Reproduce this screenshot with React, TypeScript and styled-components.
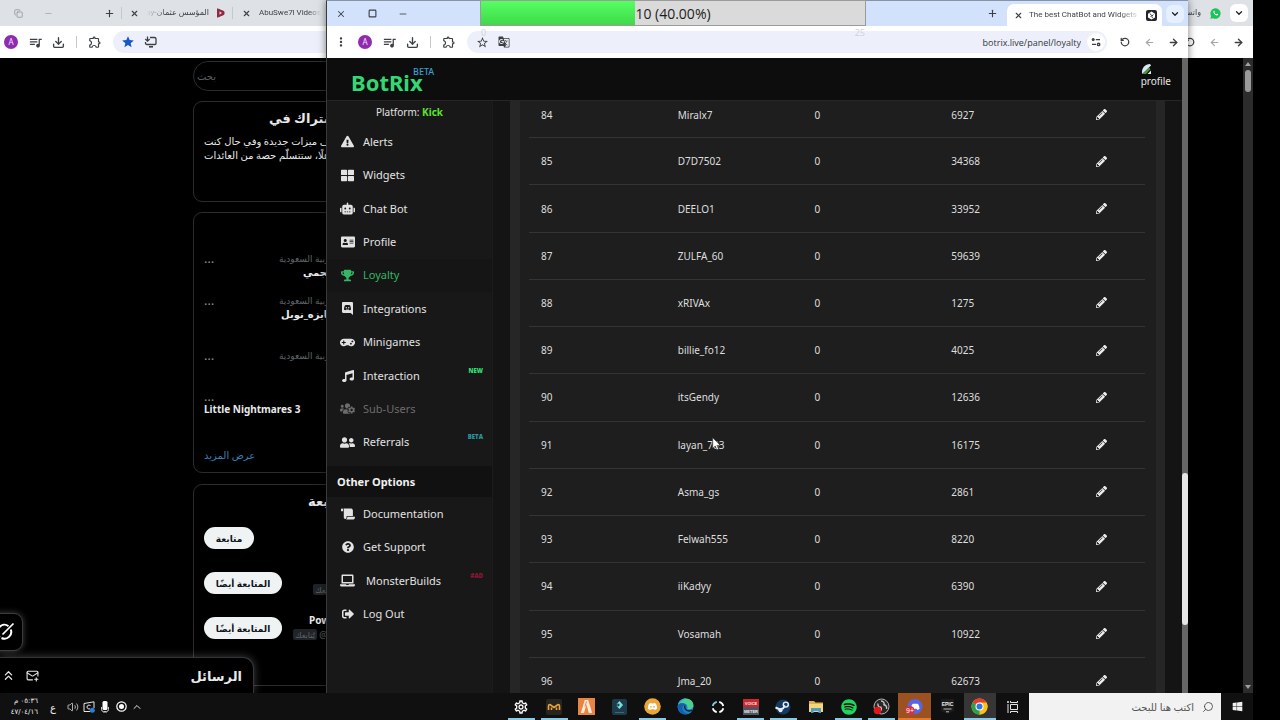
import React from 'react';
import styled, { createGlobalStyle } from 'styled-components';
import {
  FaExclamationTriangle,
  FaThLarge,
  FaRobot,
  FaAddressCard,
  FaTrophy,
  FaGamepad,
  FaMusic,
  FaUsersCog,
  FaUserFriends,
  FaScroll,
  FaQuestionCircle,
  FaLaptop,
  FaSignOutAlt,
  FaPencilAlt,
  FaWhatsapp,
  FaSpotify,
  FaDiscord,
  FaWindows,
} from 'react-icons/fa';
import {
  MdQueueMusic,
  MdOutlineExtension,
  MdOutlineSettings,
  MdStar,
  MdStarBorder,
  MdMoreVert,
  MdGTranslate,
} from 'react-icons/md';
import {
  ArrowLeft,
  ArrowRight,
  ChevronDown,
  ChevronUp,
  ChevronsUp,
  Download,
  Minus,
  Plus,
  RotateCcw,
  Search,
  Square,
  Copy,
  Volume2,
  X,
  MailPlus,
} from 'lucide-react';

const ui = '"Noto Sans", "Open Sans", "DejaVu Sans", sans-serif';

const GlobalStyle = createGlobalStyle`
  * { box-sizing: border-box; }
  html, body { margin: 0; height: 100%; background: #000; }
  body { font-family: ${ui}; font-size: 11px; overflow: hidden; }
  button { font: inherit; color: inherit; border: 0; padding: 0; background: none; cursor: pointer; }
  input { font: inherit; border: 0; padding: 0; background: none; outline: 0; }
  a { color: inherit; text-decoration: none; }
  ul { list-style: none; margin: 0; padding: 0; }
  h1, h2, p { margin: 0; }
  svg { display: block; flex: none; }
`;

const Desktop = styled.div`
  display: flex;
  flex-direction: column;
  height: 100vh;
  background: #000;
`;

const Stage = styled.main`
  position: relative;
  flex: 1;
  min-height: 0;
  overflow: hidden;
`;

const Window = styled.section<{ $left: number; $right: number }>`
  position: absolute;
  top: 0;
  bottom: 0;
  left: ${(p) => p.$left}px;
  right: ${(p) => p.$right}px;
  display: flex;
  flex-direction: column;
  overflow: hidden;
`;

const FrontWindow = styled(Window)`
  border-left: 1px solid #3a3a3a;
  border-top: 1px solid #8a93a3;
  box-shadow: 0 0 8px rgba(0, 0, 0, 0.5);
  background: #141414;
`;

/* ---------- browser chrome ---------- */

const TabStrip = styled.div<{ $color: string; $height: number }>`
  display: flex;
  align-items: center;
  justify-content: space-between;
  flex: none;
  height: ${(p) => p.$height}px;
  background: ${(p) => p.$color};
  color: #3c4043;
`;

const Group = styled.div<{ $gap: number; $pad?: string }>`
  display: flex;
  align-items: center;
  gap: ${(p) => p.$gap}px;
  padding: ${(p) => p.$pad ?? '0'};
  height: 100%;
`;

const IconButton = styled.button<{ $size?: number; $color?: string }>`
  display: flex;
  align-items: center;
  justify-content: center;
  flex: none;
  width: ${(p) => p.$size ?? 12}px;
  height: ${(p) => p.$size ?? 12}px;
  color: ${(p) => p.$color ?? '#3c4043'};
`;

const Divider = styled.span`
  flex: none;
  width: 1px;
  height: 12px;
  background: #c4c8cc;
`;

const TabTitle = styled.span<{ $width: number }>`
  flex: none;
  width: ${(p) => p.$width}px;
  font-family: Roboto, "DejaVu Sans", sans-serif;
  font-size: 8px;
  line-height: 14px;
  white-space: nowrap;
  color: #3f4347;
  mask-image: linear-gradient(to right, #000 80%, transparent);
`;

const RtlTabTitle = styled(TabTitle)`
  mask-image: linear-gradient(to left, #000 70%, transparent);
`;

const ActiveTab = styled.div`
  display: flex;
  align-items: center;
  align-self: flex-end;
  gap: 5px;
  height: 22px;
  padding: 0 5px;
  border-radius: 7px 7px 0 0;
  background: #fff;
`;

const TabSearch = styled.button<{ $color: string }>`
  display: flex;
  align-items: center;
  justify-content: center;
  width: 18px;
  height: 18px;
  border-radius: 6px;
  background: ${(p) => p.$color};
  color: #202124;
`;

const Toolbar = styled.div`
  display: flex;
  align-items: center;
  flex: none;
  height: 32px;
  background: #fff;
`;

const Omnibox = styled.label`
  display: flex;
  align-items: center;
  flex: 1;
  height: 22px;
  gap: 10px;
  padding: 0 0 0 9px;
  border-radius: 11px;
  background: #edf0fa;
`;

const Url = styled.input`
  flex: 1;
  min-width: 0;
  margin-right: -4px;
  text-align: right;
  font-family: "Open Sans", sans-serif;
  font-size: 9px;
  color: #33373b;
`;

const SiteInfo = styled.button`
  display: flex;
  align-items: center;
  justify-content: center;
  width: 18px;
  height: 18px;
  margin-right: 2px;
  border-radius: 9px;
  background: #fff;
`;

const Avatar = styled.button`
  flex: none;
  width: 14px;
  height: 14px;
  border-radius: 7px;
  background: #8e2bb0;
  color: #f3e4f8;
  font-size: 8px;
  line-height: 14px;
`;

/* ---------- social page behind ---------- */

const Scroller = styled.div`
  display: flex;
  flex: 1;
  min-height: 0;
  justify-content: space-between;
`;

const Track = styled.div`
  display: flex;
  flex-direction: column;
  align-items: center;
  justify-content: space-between;
  width: 10px;
  padding: 4px 0;
  background: #2c2c2c;
`;

const Arrow = styled.span<{ $down?: boolean }>`
  border: 3px solid transparent;
  border-top-width: ${(p) => (p.$down ? 4 : 0)}px;
  border-bottom-width: ${(p) => (p.$down ? 0 : 4)}px;
  border-top-color: ${(p) => (p.$down ? '#a0a0a0' : 'transparent')};
  border-bottom-color: ${(p) => (p.$down ? 'transparent' : '#a0a0a0')};
`;

const TrackThumb = styled.span`
  flex: none;
  width: 6px;
  height: 22px;
  margin: 4px 0 auto;
  border-radius: 3px;
  background: #9a9a9a;
`;

const SocialColumn = styled.aside`
  display: flex;
  flex-direction: column;
  width: 350px;
  margin-left: 193px;
  padding-top: 3px;
  color: #e7e9ea;
`;

const SearchField = styled.input`
  flex: none;
  height: 30px;
  padding: 0 3px;
  border: 1px solid #2a2c2e;
  border-radius: 15px;
  text-align: left;
  font-size: 10px;
  color: #71767b;
  &::placeholder { color: #5a5e62; opacity: 1; }
`;

const Panel = styled.section<{ $height: number; $top: number }>`
  flex: none;
  height: ${(p) => p.$height}px;
  margin-top: ${(p) => p.$top}px;
  padding: 7px 10px;
  border: 1px solid #2a2c2e;
  border-radius: 9px;
`;

const PanelTitle = styled.h2<{ $inset: number }>`
  padding-left: ${(p) => p.$inset}px;
  font-size: 13px;
  line-height: 18px;
  text-align: left;
  white-space: nowrap;
`;

const PanelText = styled.p`
  margin-top: 7px;
  font-size: 10px;
  line-height: 14px;
  text-align: left;
  white-space: nowrap;
`;

const TrendList = styled.ul`
  padding-top: 32px;
`;

const TrendRow = styled.li<{ $height: number }>`
  display: flex;
  height: ${(p) => p.$height}px;
`;

const TrendItem = styled.li`
  display: flex;
  flex-direction: column;
`;

const Dots = styled.button`
  align-self: flex-start;
  width: 12px;
  height: 12px;
  text-align: left;
  font-size: 13px;
  line-height: 10px;
  color: #8a8f94;
`;

const TrendText = styled.div<{ $inset: number }>`
  display: flex;
  flex-direction: column;
  padding-left: ${(p) => p.$inset}px;
  white-space: nowrap;
`;

const TrendMeta = styled.span`
  font-size: 9px;
  line-height: 13px;
  text-align: left;
  color: #5f6468;
`;

const TrendName = styled.strong<{ $inset?: number }>`
  padding-left: ${(p) => p.$inset ?? 0}px;
  font-size: 10px;
  line-height: 14px;
  text-align: left;
`;

const MoreLink = styled.a`
  display: block;
  margin-top: 32px;
  font-size: 10px;
  line-height: 14px;
  text-align: left;
  color: #3b7fb5;
`;

const FollowList = styled.ul`
  padding-top: 17px;
`;

const FollowRow = styled.li`
  display: flex;
  align-items: flex-start;
  justify-content: flex-start;
  height: 45px;
`;

const FollowButton = styled.button<{ $wide?: boolean }>`
  flex: none;
  width: ${(p) => (p.$wide ? 78 : 50)}px;
  height: 22px;
  border-radius: 11px;
  background: #eff3f4;
  color: #0f1419;
  font-size: 9px;
  font-weight: 700;
`;

const Handle = styled.div<{ $inset: number }>`
  display: flex;
  flex-direction: column;
  margin-top: -4px;
  padding-left: ${(p) => p.$inset}px;
  font-size: 9px;
  line-height: 14px;
  color: #5f6468;
  white-space: nowrap;
`;

const HandleName = styled.strong`
  height: 15px;
  padding-left: 16px;
  font-size: 10px;
  line-height: 14px;
  color: #e7e9ea;
`;

const FollowsYou = styled.span`
  padding: 0 2px;
  border-radius: 2px;
  background: #202327;
  font-size: 8px;
`;

const GrokButton = styled.button`
  position: absolute;
  left: -16px;
  bottom: 42px;
  display: flex;
  align-items: center;
  justify-content: flex-end;
  width: 39px;
  height: 38px;
  padding-right: 7px;
  border: 1px solid #3a3c3e;
  border-radius: 9px;
  background: #000;
  box-shadow: 0 0 6px rgba(255, 255, 255, 0.25);
  color: #fff;
`;

const MessagesDrawer = styled.section`
  position: absolute;
  left: 0;
  bottom: 0;
  display: flex;
  align-items: center;
  gap: 12px;
  width: 254px;
  height: 36px;
  padding: 0 11px 0 2px;
  border: 1px solid #333537;
  border-width: 1px 1px 0 0;
  border-radius: 0 11px 0 0;
  background: #000;
  box-shadow: 0 0 8px rgba(255, 255, 255, 0.25);
  color: #e7e9ea;
`;

const DrawerTitle = styled.h2`
  margin-left: auto;
  font-size: 13px;
  line-height: 20px;
`;

/* ---------- dashboard ---------- */

const Header = styled.header`
  position: relative;
  z-index: 1;
  display: flex;
  align-items: center;
  justify-content: space-between;
  flex: none;
  height: 43px;
  padding: 0 11px 0 24px;
  border-bottom: 1px solid #262626;
  background: #0d0d0d;
`;

const Brand = styled.h1`
  position: relative;
  padding-top: 6px;
  font-size: 22px;
  line-height: 28px;
  font-weight: 700;
  color: #31d874;
`;

const BrandTag = styled.span`
  position: absolute;
  top: 4px;
  left: 62px;
  font-size: 9px;
  line-height: 12px;
  font-weight: 500;
  color: #3a9fce;
`;

const ProfileLink = styled.a`
  display: flex;
  flex-direction: column;
  align-self: flex-start;
  padding-top: 5px;
  font-size: 10px;
  line-height: 12px;
  color: #e6e6e6;
`;

const Page = styled.div`
  display: flex;
  flex-direction: column;
  flex: 1;
  min-width: 0;
  min-height: 0;
`;

const Body = styled.div`
  display: flex;
  flex: 1;
  min-height: 0;
`;

const Sidebar = styled.nav`
  flex: none;
  width: 166px;
  border-right: 1px solid #1c1c1c;
  background: #181818;
  color: #e2e2e2;
  overflow: hidden;
`;

const Platform = styled.p`
  padding: 3px 0 5px;
  font-size: 10px;
  line-height: 16px;
  text-align: center;
`;

const KickName = styled.strong`
  color: #5be32a;
`;

const NavList = styled.ul<{ $height: number }>`
  display: flex;
  flex-direction: column;
  height: ${(p) => p.$height}px;
`;

const NavItem = styled.li<{ $active?: boolean; $muted?: boolean }>`
  flex: 1;
  background: ${(p) => (p.$active ? '#151515' : 'transparent')};
  color: ${(p) => (p.$active ? '#35b566' : p.$muted ? '#6c6c6c' : 'inherit')};
`;

const NavLink = styled.a`
  display: grid;
  grid-template-columns: 15px 1fr auto;
  align-items: center;
  justify-items: start;
  gap: 8px;
  height: 100%;
  padding: 0 9px 0 13px;
  font-size: 11px;
  line-height: 16px;
  & > svg { justify-self: center; }
`;

const NavLabel = styled.span<{ $indent?: boolean }>`
  padding-left: ${(p) => (p.$indent ? 3 : 0)}px;
`;

const Tag = styled.span<{ $color: string }>`
  padding-bottom: 10px;
  font-family: "Open Sans", sans-serif;
  font-size: 6px;
  line-height: 8px;
  font-weight: 800;
  color: ${(p) => p.$color};
`;

const SectionTitle = styled.h2`
  margin-top: 7px;
  padding: 0 10px;
  background: #111;
  font-size: 11px;
  line-height: 31px;
  color: #f0f0f0;
`;

const Content = styled.div`
  flex: 1;
  min-width: 0;
  padding: 0 17px;
  overflow: hidden;
`;

const Card = styled.div`
  height: 100%;
  padding: 0 11px 0 9px;
  border: solid #262626;
  border-width: 0 9px 0 10px;
  background: #1e1e1e;
  overflow: hidden;
`;

const Table = styled.table`
  width: 100%;
  height: 613px;
  margin-top: -9px;
  border-collapse: collapse;
  table-layout: fixed;
  font-size: 10px;
  color: #dedede;
`;

const Col = styled.col`
  width: 22.2%;
`;

const Cell = styled.td`
  padding: 0 12px;
  border-bottom: 1px solid #343434;
`;

const EditCell = styled(Cell)`
  padding: 0 19px;
`;

const PageScroll = styled.div`
  display: flex;
  flex-direction: column;
  flex: none;
  width: 6px;
  padding: 415px 0 68px;
  background: #666;
`;

const PageThumb = styled.span`
  flex: 1;
  border-radius: 3px;
  background: #e6e6e6;
`;

/* ---------- overlays ---------- */

const Goal = styled.div`
  position: absolute;
  top: 0;
  left: 480px;
  width: 386px;
  height: 26px;
  border: 1px solid #9b9b9b;
  background: #dadada;
`;

const GoalFill = styled.div`
  width: 40%;
  height: 100%;
  background: linear-gradient(#55ff62, #3fd84a);
`;

const GoalText = styled.span`
  position: absolute;
  inset: 0;
  font-family: "Open Sans", sans-serif;
  font-size: 14px;
  line-height: 25px;
  text-align: center;
  color: #1c1c1c;
`;

const GoalLimit = styled.span<{ $side: 'left' | 'right' }>`
  position: absolute;
  top: 26px;
  ${(p) => p.$side}: 0;
  font-size: 9px;
  line-height: 12px;
  color: #d2d3da;
`;

const Cursor = styled.svg`
  position: absolute;
  left: 712px;
  top: 437px;
`;

/* ---------- taskbar ---------- */

const Taskbar = styled.footer`
  display: flex;
  flex: none;
  justify-content: space-between;
  height: 27px;
  margin-right: 27px;
  background: #101010;
  color: #f0f0f0;
`;

const Tray = styled.div`
  display: flex;
  align-items: center;
  gap: 4px;
  padding-left: 8px;
`;

const Clock = styled.time`
  width: 30px;
  margin-right: 8px;
  font-family: "DejaVu Sans", sans-serif;
  font-size: 7px;
  line-height: 11px;
  text-align: right;
  white-space: nowrap;
`;

const Language = styled.span`
  width: 8px;
  margin-right: 5px;
  font-size: 10px;
`;

const TaskGroup = styled.div`
  display: flex;
`;

const Apps = styled.div`
  display: flex;
  width: 524px;
`;

const TaskButton = styled.button<{ $open?: boolean; $bg?: string; $line?: string }>`
  display: flex;
  flex: 1;
  align-items: center;
  justify-content: center;
  background-color: ${(p) => p.$bg ?? 'transparent'};
  background-image: ${(p) =>
    p.$open ? `linear-gradient(${p.$line ?? '#86cbe6'}, ${p.$line ?? '#86cbe6'})` : 'none'};
  background-repeat: no-repeat;
  background-position: bottom center;
  background-size: ${(p) => (p.$bg ? '100%' : '27px')} 2px;
`;

const TaskSearch = styled.label`
  display: flex;
  align-items: center;
  gap: 8px;
  width: 192px;
  padding: 0 7px;
  background: #f2f2f2;
  color: #333;
`;

const TaskSearchInput = styled.input`
  flex: 1;
  min-width: 0;
  text-align: right;
  font-size: 10px;
  &::placeholder { color: #555; opacity: 1; }
`;

const MirroredSearch = styled(Search)`
  transform: scaleX(-1);
`;

const Start = styled.button`
  display: flex;
  align-items: center;
  justify-content: center;
  width: 32px;
`;

/* ---------- drawings ---------- */

const TuneIcon = () => (
  <svg width="10" height="10" viewBox="0 0 10 10" fill="none" stroke="#3c4043" strokeWidth="1.4">
    <circle cx="2.2" cy="2.6" r="1.5" fill="#3c4043" stroke="none" />
    <path d="M4.8 2.6H9M1 7.4h4" />
    <circle cx="7.6" cy="7.4" r="1.2" />
  </svg>
);

const InstallIcon = () => (
  <svg width="13" height="12" viewBox="0 0 13 12" fill="none" stroke="#3c4043" strokeWidth="1.3">
    <path d="M6 1.500H10.500q1.500 0 1.500 1.500v4.500q0 1-1 1H3Q1.500 8.500 1.500 7V6" />
    <path d="M5 10.800h4" strokeWidth="1.600" />
    <path d="M3.500.5v4.500M1.300 3 3.500 5.200 5.700 3" />
  </svg>
);

const WhatsAppLogo = () => (
  <svg width="11" height="11" viewBox="0 0 11 11">
    <path d="M5.500.3a5.200 5.200 0 1 1-2.300 9.900L.4 10.700 1 8A5.200 5.200 0 0 1 5.500.3Z" fill="#1fc15a" />
    <path d="M3.600 3c.4-.5.9-.2 1 .3.200.6 0 .8-.2 1.100.5.900 1.200 1.500 2.100 1.900.4-.5.700-.6 1.200-.3.600.3.600.6.300 1C6.500 8.500 2.500 5.500 3.600 3Z" fill="#fff" />
  </svg>
);

const SiteLogo = () => (
  <svg width="11" height="11" viewBox="0 0 11 11">
    <rect width="11" height="11" rx="2" fill="#25262b" />
    <path d="M5.500 1.600 9 3.700v3.700L5.500 9.500 2 7.400V3.700Z" fill="#fff" />
    <path d="M4 3.500 5.500 5.500 4.500 6.500M7.300 4.500 5.800 6.500 6.500 8" fill="none" stroke="#25262b" strokeWidth=".9" />
  </svg>
);

const PlayLogo = () => (
  <svg width="9" height="10" viewBox="0 0 9 10">
    <path d="M1.500.8 8 3.600v2.800L1.500 9.200Z" fill="#8e2a44" stroke="#8e2a44" strokeLinejoin="round" />
    <path d="M3.500 3.200 6 5 3.500 6.800Z" fill="#f3c9d0" />
  </svg>
);

const ServerBubbleIcon = () => (
  <svg width="11" height="13" viewBox="0 0 11 13">
    <path d="M1.200 0h8.600C10.500 0 11 .5 11 1.200V13L8.700 11H1.200C.5 11 0 10.500 0 9.800V1.200C0 .5.5 0 1.200 0Z" fill="currentColor" />
    <path d="M2 7.800C2 5.500 2.600 3.400 3.700 3.100 4.800 2.800 6.200 2.800 7.300 3.100 8.400 3.400 9 5.500 9 7.800L7.400 8.300 6.700 7.400H4.300L3.600 8.300Z" fill="#181818" />
    <circle cx="4.300" cy="5.700" r=".7" fill="currentColor" />
    <circle cx="6.700" cy="5.700" r=".7" fill="currentColor" />
  </svg>
);

const BrokenImage = () => (
  <svg width="12" height="12" viewBox="0 0 12 12">
    <path d="M1 9C1 5 4 1 9 1l1 1.500L4.500 8 1 11Z" fill="#d9e8f5" />
    <path d="M1.500 11 8 4.500 9.500 6 5 11Z" fill="#4f9a3c" />
    <path d="M6.500 11 10 7.500V11Z" fill="#e8e8e8" />
  </svg>
);

const GrokIcon = () => (
  <svg width="20" height="20" viewBox="0 0 20 20" fill="none" stroke="#fff" strokeWidth="2">
    <path d="M13.500 4.200A6.800 6.800 0 0 0 4.200 14M15.800 7.500A6.800 6.800 0 0 1 6.500 16" />
    <path d="M18.500 1.500 7.500 12.500" strokeWidth="1.700" />
    <path d="M2 18 4.800 14" strokeWidth="1.700" />
  </svg>
);

const EdgeIcon = () => (
  <svg width="17" height="17" viewBox="0 0 17 17">
    <circle cx="8.500" cy="8.500" r="8" fill="#1b7fd0" />
    <path d="M1 7C2 2.800 5.200.500 8.700.500c4.500 0 7.800 3.300 7.800 6.800 0 2.500-2 4-4 4-1.800 0-2.500-.7-2.200-1.500C11 8.500 10 5.800 7.200 5.200 4.500 4.700 2 5.500 1 7Z" fill="#4fcf8e" />
    <path d="M1 7C2 2.800 5.200.5 8.700.5 6 2 4 3.500 1 7Z" fill="#35a8dc" />
    <path d="M1 7c1.500-2.500 6-2.500 7.500 0C6 7 5 9 5.700 11.500 6.400 14 8.500 15.500 11 15.800 5 18-.5 13 1 7Z" fill="#1560a8" />
    <path d="M8 7.500c-1 2 .5 5.500 4 5.500 1.500 0 2.500-.4 3.500-1" fill="none" stroke="#0c1a26" strokeWidth="1.300" />
  </svg>
);

const ChromeIcon = () => (
  <svg width="17" height="17" viewBox="0 0 17 17">
    <circle cx="8.500" cy="8.500" r="8" fill="#fbc116" />
    <path d="M8.500 8.500 1.570 4.500A8 8 0 0 1 15.430 4.500Z" fill="#e33b2e" />
    <path d="M8.500 8.500 1.570 4.500A8 8 0 0 0 8.500 16.500Z" fill="#2aa24c" />
    <path d="M8.500 4.500h6.930A8 8 0 0 1 8.500 16.500L12 10.500Z" fill="#fbc116" />
    <circle cx="8.500" cy="8.500" r="4" fill="#fff" />
    <circle cx="8.500" cy="8.500" r="3" fill="#2f77e8" />
  </svg>
);

const SteamIcon = () => (
  <svg width="16" height="16" viewBox="0 0 16 16">
    <circle cx="8" cy="8" r="7.500" fill="#123a63" />
    <path d="M.5 8.500 5 10.500l3-1L10 6.500" fill="none" stroke="#e9eef2" strokeWidth="2" />
    <circle cx="10.800" cy="5.600" r="2.500" fill="none" stroke="#e9eef2" strokeWidth="1.400" />
    <circle cx="5.500" cy="11.200" r="2" fill="#e9eef2" />
  </svg>
);

const FolderIcon = () => (
  <svg width="16" height="14" viewBox="0 0 16 14">
    <path d="M1 1h5l1.500 1.500H15V12H1Z" fill="#e0b04a" />
    <path d="M1 4h14v8H1Z" fill="#f6d778" />
    <path d="M3 13V8h10v5h-2.500v-2h-5v2Z" fill="#4a9bd0" />
  </svg>
);

const MonitorAppIcon = () => (
  <svg width="16" height="16" viewBox="0 0 16 16">
    <rect width="16" height="16" rx="2" fill="#27251f" />
    <path d="M2.500 11V7Q2.500 5.500 4 5.500L8 8.500l4-3Q13.500 5.500 13.500 7v4M5.500 8.500V11M10.500 8.500V11" fill="none" stroke="#e8a33a" strokeWidth="1.600" />
  </svg>
);

const FiveMIcon = () => (
  <svg width="17" height="17" viewBox="0 0 17 17">
    <rect width="17" height="17" fill="#ea8440" />
    <path d="M6.800 2h3.400l4 13h-3.400L8.500 6.500 6 15H2.800Z" fill="#fbe9dc" />
    <path d="m8.500 3.500-1.500 5" stroke="#ea8440" />
  </svg>
);

const FilmoraIcon = () => (
  <svg width="15" height="16" viewBox="0 0 15 16">
    <rect width="15" height="16" rx="2" fill="#1d3b4b" />
    <path d="m7.500 2 3.500 4-3.500 4L4.500 7 6 6 4.500 5Z" fill="#74e3dc" />
    <path d="M5.500 4 8 6 5.500 8Z" fill="#1d3b4b" />
    <path d="M3 13.500h9" stroke="#3d6678" />
  </svg>
);

const SyncIcon = () => (
  <svg width="14" height="14" viewBox="0 0 14 14" fill="none" strokeWidth="1.700">
    <path d="M5.800 1.800A5.400 5.400 0 0 0 1.700 6" stroke="#7fd0e0" />
    <path d="M8.200 1.800A5.400 5.400 0 0 1 12.300 6M12.300 8.200a5.400 5.400 0 0 1-4 4M5.800 12.200a5.400 5.400 0 0 1-4-4" stroke="#fff" />
  </svg>
);

const VoiceIcon = () => (
  <svg width="16" height="16" viewBox="0 0 16 16">
    <rect width="16" height="8" fill="#c8272f" />
    <rect y="8" width="16" height="8" fill="#4d565e" />
    <g fill="#f4e6e6" fontFamily="Liberation Sans, sans-serif" fontSize="4" fontWeight="700" textAnchor="middle">
      <text x="8" y="5.500">VOICE</text>
      <text x="8" y="13.500">METER</text>
    </g>
  </svg>
);

const ObsIcon = () => (
  <svg width="17" height="17" viewBox="0 0 17 17">
    <circle cx="8.500" cy="8.500" r="7.500" fill="#2a2729" stroke="#b8b8b8" />
    <path d="M8 3c2.500 0 3.500 2 3 3.800 2 .4 3 2 2.500 4M5 5.500C4.500 8 6 9.500 8 9.300c1 2 0 3.500-1.500 4" fill="none" stroke="#c8c8c8" strokeWidth="1.400" />
    <circle cx="4.500" cy="12.500" r="3.800" fill="#e01818" />
  </svg>
);

const DiscordBadgeIcon = () => (
  <svg width="18" height="18" viewBox="0 0 18 18">
    <circle cx="10" cy="8.500" r="7.500" fill="#5865e6" />
    <path d="M6 11c0-3 1-5 2-5.300l4.500 0C13.500 6 14.500 8 14.500 11l-2 1-1-1.300h-2L8.500 12Z" fill="#fff" />
    <circle cx="5" cy="12.500" r="4.500" fill="#d8303c" />
    <text x="5" y="15" fill="#fff" fontSize="7" fontFamily="Liberation Sans, sans-serif" textAnchor="middle">9+</text>
  </svg>
);

const EpicIcon = () => (
  <svg width="13" height="16" viewBox="0 0 13 16">
    <path d="M0 0h13v12l-6.500 3L0 12Z" fill="#1c1c1c" />
    <text x="6.500" y="7" fill="#eee" fontSize="5" fontWeight="700" fontFamily="Liberation Sans, sans-serif" textAnchor="middle">EPIC</text>
    <path d="M2.500 10h8M5 12.800h3" stroke="#bbb" />
  </svg>
);

const TaskViewIcon = () => (
  <svg width="12" height="12" viewBox="0 0 12 12" fill="none" stroke="#e6e6e6">
    <path d="M3.500 3.500h7v5h-7ZM3.500 0v1.500h7V0M3.500 12v-1.500h7V12M1 3v9" />
    <circle cx="1" cy="1" r=".6" fill="#e6e6e6" />
  </svg>
);

const MicIcon = () => (
  <svg width="10" height="12" viewBox="0 0 10 12">
    <rect x="2.500" width="5" height="9" rx="1.500" fill="#fff" />
    <path d="M1.500 6v2.500q0 2 2 2h3q2 0 2-2V6M3 12h4" stroke="#ccc" fill="none" />
  </svg>
);

const RecordIcon = () => (
  <svg width="11" height="11" viewBox="0 0 11 11">
    <circle cx="5.500" cy="5.500" r="4.700" fill="none" stroke="#fff" strokeWidth="1.200" />
    <circle cx="5.500" cy="5.500" r="2.500" fill="#fff" />
  </svg>
);

const MeetIcon = () => (
  <svg width="12" height="12" viewBox="0 0 12 12" fill="none" stroke="#e6e6e6">
    <path d="M1 2.500 11 .8V7M1 2.500v8h6" />
    <path d="M7.500 4.500C5.500 3.500 4 4.500 4 6s1.500 2.500 3 1.800" />
    <circle cx="9.300" cy="9.300" r="2.500" fill="#2f7fd0" stroke="none" />
  </svg>
);

const DiscordOrangeIcon = () => (
  <svg width="17" height="17" viewBox="0 0 17 17">
    <circle cx="8.500" cy="8.500" r="8.300" fill="#eba63a" />
    <g transform="translate(3.500 3.500)"><FaDiscord size={10} color="#fff" /></g>
  </svg>
);

/* ---------- data ---------- */

type Nav = {
  label: string;
  icon: React.ReactNode;
  active?: boolean;
  muted?: boolean;
  indent?: boolean;
  tag?: string;
  tagColor?: string;
};

const mainNav: Nav[] = [
  { label: 'Alerts', icon: <FaExclamationTriangle size={13} /> },
  { label: 'Widgets', icon: <FaThLarge size={13} /> },
  { label: 'Chat Bot', icon: <FaRobot size={15} /> },
  { label: 'Profile', icon: <FaAddressCard size={14} /> },
  { label: 'Loyalty', icon: <FaTrophy size={13} />, active: true },
  { label: 'Integrations', icon: <ServerBubbleIcon /> },
  { label: 'Minigames', icon: <FaGamepad size={15} /> },
  { label: 'Interaction', icon: <FaMusic size={12} />, tag: 'NEW', tagColor: '#2fe070' },
  { label: 'Sub-Users', icon: <FaUsersCog size={15} />, muted: true },
  { label: 'Referrals', icon: <FaUserFriends size={15} />, tag: 'BETA', tagColor: '#2b959c' },
];

const otherNav: Nav[] = [
  { label: 'Documentation', icon: <FaScroll size={14} /> },
  { label: 'Get Support', icon: <FaQuestionCircle size={12} /> },
  { label: 'MonsterBuilds', icon: <FaLaptop size={15} />, indent: true, tag: '#AD', tagColor: '#8a1734' },
  { label: 'Log Out', icon: <FaSignOutAlt size={12} /> },
];

const viewers: [number, string, number, number][] = [
  [84, 'Miralx7', 0, 6927],
  [85, 'D7D7502', 0, 34368],
  [86, 'DEELO1', 0, 33952],
  [87, 'ZULFA_60', 0, 59639],
  [88, 'xRIVAx', 0, 1275],
  [89, 'billie_fo12', 0, 4025],
  [90, 'itsGendy', 0, 12636],
  [91, 'layan_703', 0, 16175],
  [92, 'Asma_gs', 0, 2861],
  [93, 'Felwah555', 0, 8220],
  [94, 'iiKadyy', 0, 6390],
  [95, 'Vosamah', 0, 10922],
  [96, 'Jma_20', 0, 62673],
];

const NavSection = ({ items, height }: { items: Nav[]; height: number }) => (
  <NavList $height={height}>
    {items.map((n) => (
      <NavItem key={n.label} $active={n.active} $muted={n.muted}>
        <NavLink href="#">
          {n.icon}
          <NavLabel $indent={n.indent}>{n.label}</NavLabel>
          {n.tag && <Tag $color={n.tagColor ?? '#fff'}>{n.tag}</Tag>}
        </NavLink>
      </NavItem>
    ))}
  </NavList>
);

const Tools = () => (
  <>
    <Avatar aria-label="Account">A</Avatar>
    <IconButton aria-label="Media controls"><MdQueueMusic size={15} /></IconButton>
    <IconButton aria-label="Downloads"><Download size={13} strokeWidth={2.5} /></IconButton>
    <Group $gap={12} $pad="0 0 0 1px">
      <Divider />
      <IconButton aria-label="Extensions"><MdOutlineExtension size={14} /></IconButton>
    </Group>
  </>
);

const History = () => (
  <Group $gap={12} $pad="0 9px 0 12px">
    <IconButton aria-label="Reload"><RotateCcw size={10} strokeWidth={3} /></IconButton>
    <IconButton aria-label="Forward" $color="#a3a7ab"><ArrowLeft size={11} strokeWidth={2.5} /></IconButton>
    <IconButton aria-label="Back"><ArrowRight size={11} strokeWidth={3} /></IconButton>
  </Group>
);

const TrendPanelList = () => (
  <TrendList>
    <TrendRow $height={42}>
      <Dots aria-label="More">…</Dots>
      <TrendText $inset={63} dir="rtl">
        <TrendMeta>الشائع في المملكة العربية السعودية</TrendMeta>
        <TrendName $inset={24}>النجمي</TrendName>
      </TrendText>
    </TrendRow>
    <TrendRow $height={55}>
      <Dots aria-label="More">…</Dots>
      <TrendText $inset={63} dir="rtl">
        <TrendMeta>الشائع في المملكة العربية السعودية</TrendMeta>
        <TrendName $inset={2}>جايزه_نوبل</TrendName>
      </TrendText>
    </TrendRow>
    <TrendRow $height={41}>
      <Dots aria-label="More">…</Dots>
      <TrendText $inset={63} dir="rtl">
        <TrendMeta>الشائع في المملكة العربية السعودية</TrendMeta>
      </TrendText>
    </TrendRow>
    <TrendItem>
      <Dots aria-label="More">…</Dots>
      <TrendName>Little Nightmares 3</TrendName>
    </TrendItem>
  </TrendList>
);

const SocialWindow = () => (
  <Window $left={0} $right={27}>
    <TabStrip $color="#dee2e6" $height={26}>
      <Group $gap={7} $pad="0 0 0 12px">
        <Group $gap={18}>
          <IconButton aria-label="Restore" $color="#8b8f94"><Copy size={9} /></IconButton>
          <IconButton aria-label="Minimize" $color="#a0a4a8"><Minus size={9} /></IconButton>
        </Group>
        <Group $gap={6} $pad="0 0 0 42px">
          <IconButton aria-label="New tab"><Plus size={11} strokeWidth={2.5} /></IconButton>
          <Divider />
          <IconButton aria-label="Close tab"><X size={9} strokeWidth={3} /></IconButton>
        </Group>
        <RtlTabTitle $width={62} dir="rtl">المؤسس عثمان-ay</RtlTabTitle>
        <PlayLogo />
        <Divider />
        <IconButton aria-label="Close tab"><X size={9} strokeWidth={3} /></IconButton>
        <TabTitle $width={62}>AbuSwe7l Videos</TabTitle>
      </Group>
      <Group $gap={9} $pad="0 5px 0 0">
        <RtlTabTitle $width={28} dir="rtl">واتساب</RtlTabTitle>
        <WhatsAppLogo />
        <TabSearch aria-label="Search tabs" $color="#fff"><ChevronDown size={10} strokeWidth={3} /></TabSearch>
      </Group>
    </TabStrip>
    <Toolbar>
      <Group $gap={11} $pad="0 12px 0 4px"><Tools /></Group>
      <Omnibox>
        <IconButton aria-label="Bookmarked" $color="#1557c9"><MdStar size={14} /></IconButton>
        <IconButton aria-label="Install"><InstallIcon /></IconButton>
      </Omnibox>
      <History />
    </Toolbar>
    <Scroller>
      <SocialColumn>
        <SearchField aria-label="بحث" placeholder="بحث" dir="rtl" />
        <Panel $height={101} $top={10} dir="rtl">
          <PanelTitle $inset={65}>الاشتراك في</PanelTitle>
          <PanelText>
            اشترك لاكتشاف ميزات جديدة وفي حال كنت
            <br />
            مؤهلًا، ستتسلّم حصة من العائدات
          </PanelText>
        </Panel>
        <Panel $height={261} $top={10}>
          <TrendPanelList />
          <MoreLink href="#">عرض المزيد</MoreLink>
        </Panel>
        <Panel $height={202} $top={11}>
          <PanelTitle $inset={104} dir="rtl">للمتابعة</PanelTitle>
          <FollowList>
            <FollowRow><FollowButton>متابعة</FollowButton></FollowRow>
            <FollowRow>
              <FollowButton $wide>المتابعة أيضًا</FollowButton>
              <Handle $inset={31}><HandleName /><span><FollowsYou>يُتابعك</FollowsYou></span></Handle>
            </FollowRow>
            <FollowRow>
              <FollowButton $wide>المتابعة أيضًا</FollowButton>
              <Handle $inset={11}>
                <HandleName>Power</HandleName>
                <span><FollowsYou>يُتابعك</FollowsYou> @power</span>
              </Handle>
            </FollowRow>
          </FollowList>
        </Panel>
      </SocialColumn>
      <Track>
        <Arrow />
        <TrackThumb />
        <Arrow $down />
      </Track>
    </Scroller>
    <GrokButton aria-label="Grok"><GrokIcon /></GrokButton>
    <MessagesDrawer>
      <IconButton aria-label="Expand" $color="#e7e9ea"><ChevronsUp size={15} /></IconButton>
      <IconButton aria-label="New message" $color="#e7e9ea"><MailPlus size={13} /></IconButton>
      <DrawerTitle>الرسائل</DrawerTitle>
    </MessagesDrawer>
  </Window>
);

const DashboardWindow = () => (
  <FrontWindow $left={326} $right={92}>
    <TabStrip $color="#d3e2fc" $height={25}>
      <Group $gap={19} $pad="0 0 0 8px">
        <IconButton aria-label="Close"><X size={10} strokeWidth={2.5} /></IconButton>
        <IconButton aria-label="Maximize"><Square size={9} strokeWidth={3} /></IconButton>
        <IconButton aria-label="Minimize"><Minus size={10} /></IconButton>
      </Group>
      <Group $gap={4} $pad="0 4px 0 0">
        <Group $gap={9}>
          <IconButton aria-label="New tab"><Plus size={11} strokeWidth={2.5} /></IconButton>
          <ActiveTab>
            <IconButton aria-label="Close tab"><X size={9} strokeWidth={3} /></IconButton>
            <TabTitle $width={112}>The best ChatBot and Widgets</TabTitle>
            <SiteLogo />
          </ActiveTab>
        </Group>
        <TabSearch aria-label="Search tabs" $color="#e6effd"><ChevronDown size={10} strokeWidth={3} /></TabSearch>
      </Group>
    </TabStrip>
    <Toolbar>
      <Group $gap={11} $pad="0 12px 0 8px">
        <IconButton aria-label="Menu"><MdMoreVert size={14} /></IconButton>
        <Tools />
      </Group>
      <Omnibox>
        <IconButton aria-label="Bookmark"><MdStarBorder size={13} /></IconButton>
        <IconButton aria-label="Translate"><MdGTranslate size={12} /></IconButton>
        <Url aria-label="Address" defaultValue="botrix.live/panel/loyalty" />
        <SiteInfo aria-label="Site information"><TuneIcon /></SiteInfo>
      </Omnibox>
      <History />
    </Toolbar>
    <Scroller>
      <Page>
        <Header>
          <Brand>
            BotRix
            <BrandTag>BETA</BrandTag>
          </Brand>
          <ProfileLink href="#"><BrokenImage />profile</ProfileLink>
        </Header>
        <Body>
          <Sidebar>
            <Platform>Platform: <KickName>Kick</KickName></Platform>
            <NavSection items={mainNav} height={334} />
            <SectionTitle>Other Options</SectionTitle>
            <NavSection items={otherNav} height={134} />
          </Sidebar>
          <Content>
            <Card>
              <Table>
                <colgroup><Col /><Col /><Col /><Col /><col /></colgroup>
                <tbody>
                  {viewers.map(([rank, name, level, points]) => (
                    <tr key={rank}>
                      <Cell>{rank}</Cell>
                      <Cell>{name}</Cell>
                      <Cell>{level}</Cell>
                      <Cell>{points}</Cell>
                      <EditCell>
                        <IconButton aria-label={`Edit ${name}`} $color="#ececec"><FaPencilAlt size={11} /></IconButton>
                      </EditCell>
                    </tr>
                  ))}
                </tbody>
              </Table>
            </Card>
          </Content>
        </Body>
      </Page>
      <PageScroll><PageThumb /></PageScroll>
    </Scroller>
  </FrontWindow>
);

const apps: { name: string; icon: React.ReactNode; open?: boolean; bg?: string; line?: string }[] = [
  { name: 'Settings', icon: <MdOutlineSettings size={16} color="#fff" />, open: true },
  { name: 'Monitor', icon: <MonitorAppIcon />, open: true },
  { name: 'FiveM', icon: <FiveMIcon /> },
  { name: 'Filmora', icon: <FilmoraIcon /> },
  { name: 'Discord Canary', icon: <DiscordOrangeIcon />, open: true },
  { name: 'Edge', icon: <EdgeIcon /> },
  { name: 'Sync', icon: <SyncIcon /> },
  { name: 'Voicemeeter', icon: <VoiceIcon />, open: true },
  { name: 'Steam', icon: <SteamIcon />, open: true },
  { name: 'Files', icon: <FolderIcon /> },
  { name: 'Spotify', icon: <FaSpotify size={16} color="#22d35e" />, open: true },
  { name: 'OBS', icon: <ObsIcon />, open: true },
  { name: 'Discord', icon: <DiscordBadgeIcon />, open: true, bg: '#9c5220', line: '#e8792a' },
  { name: 'Epic Games', icon: <EpicIcon /> },
  { name: 'Chrome', icon: <ChromeIcon />, open: true, bg: '#363636' },
  { name: 'Task view', icon: <TaskViewIcon /> },
];

export default function App() {
  return (
    <Desktop>
      <GlobalStyle />
      <Stage>
        <SocialWindow />
        <DashboardWindow />
        <Goal>
          <GoalFill />
          <GoalText>10 (40.00%)</GoalText>
          <GoalLimit $side="left">0</GoalLimit>
          <GoalLimit $side="right">25</GoalLimit>
        </Goal>
        <Cursor width="10" height="14" viewBox="0 0 10 14">
          <path d="M.7.7v10.600l2.500-2.300 1.700 3.800 1.700-.8-1.700-3.600h3.400Z" fill="#fff" stroke="#333" strokeWidth=".6" />
        </Cursor>
      </Stage>
      <Taskbar>
        <Tray>
          <Clock dir="rtl">٠٥:٣٦ م<br />٤٧/٠٤/١٦</Clock>
          <Language>ع</Language>
          <IconButton aria-label="Volume" $color="#e6e6e6"><Volume2 size={12} strokeWidth={1.5} /></IconButton>
          <IconButton aria-label="Meet now"><MeetIcon /></IconButton>
          <IconButton aria-label="Microphone"><MicIcon /></IconButton>
          <IconButton aria-label="Recording"><RecordIcon /></IconButton>
          <IconButton aria-label="Hidden icons" $color="#e6e6e6"><ChevronUp size={12} /></IconButton>
        </Tray>
        <TaskGroup>
          <Apps>
            {apps.map((a) => (
              <TaskButton key={a.name} aria-label={a.name} $open={a.open} $bg={a.bg} $line={a.line}>{a.icon}</TaskButton>
            ))}
          </Apps>
          <TaskSearch>
            <TaskSearchInput dir="rtl" aria-label="بحث" placeholder="اكتب هنا للبحث" />
            <MirroredSearch size={12} strokeWidth={1.5} />
          </TaskSearch>
          <Start aria-label="Start"><FaWindows size={11} /></Start>
        </TaskGroup>
      </Taskbar>
    </Desktop>
  );
}
